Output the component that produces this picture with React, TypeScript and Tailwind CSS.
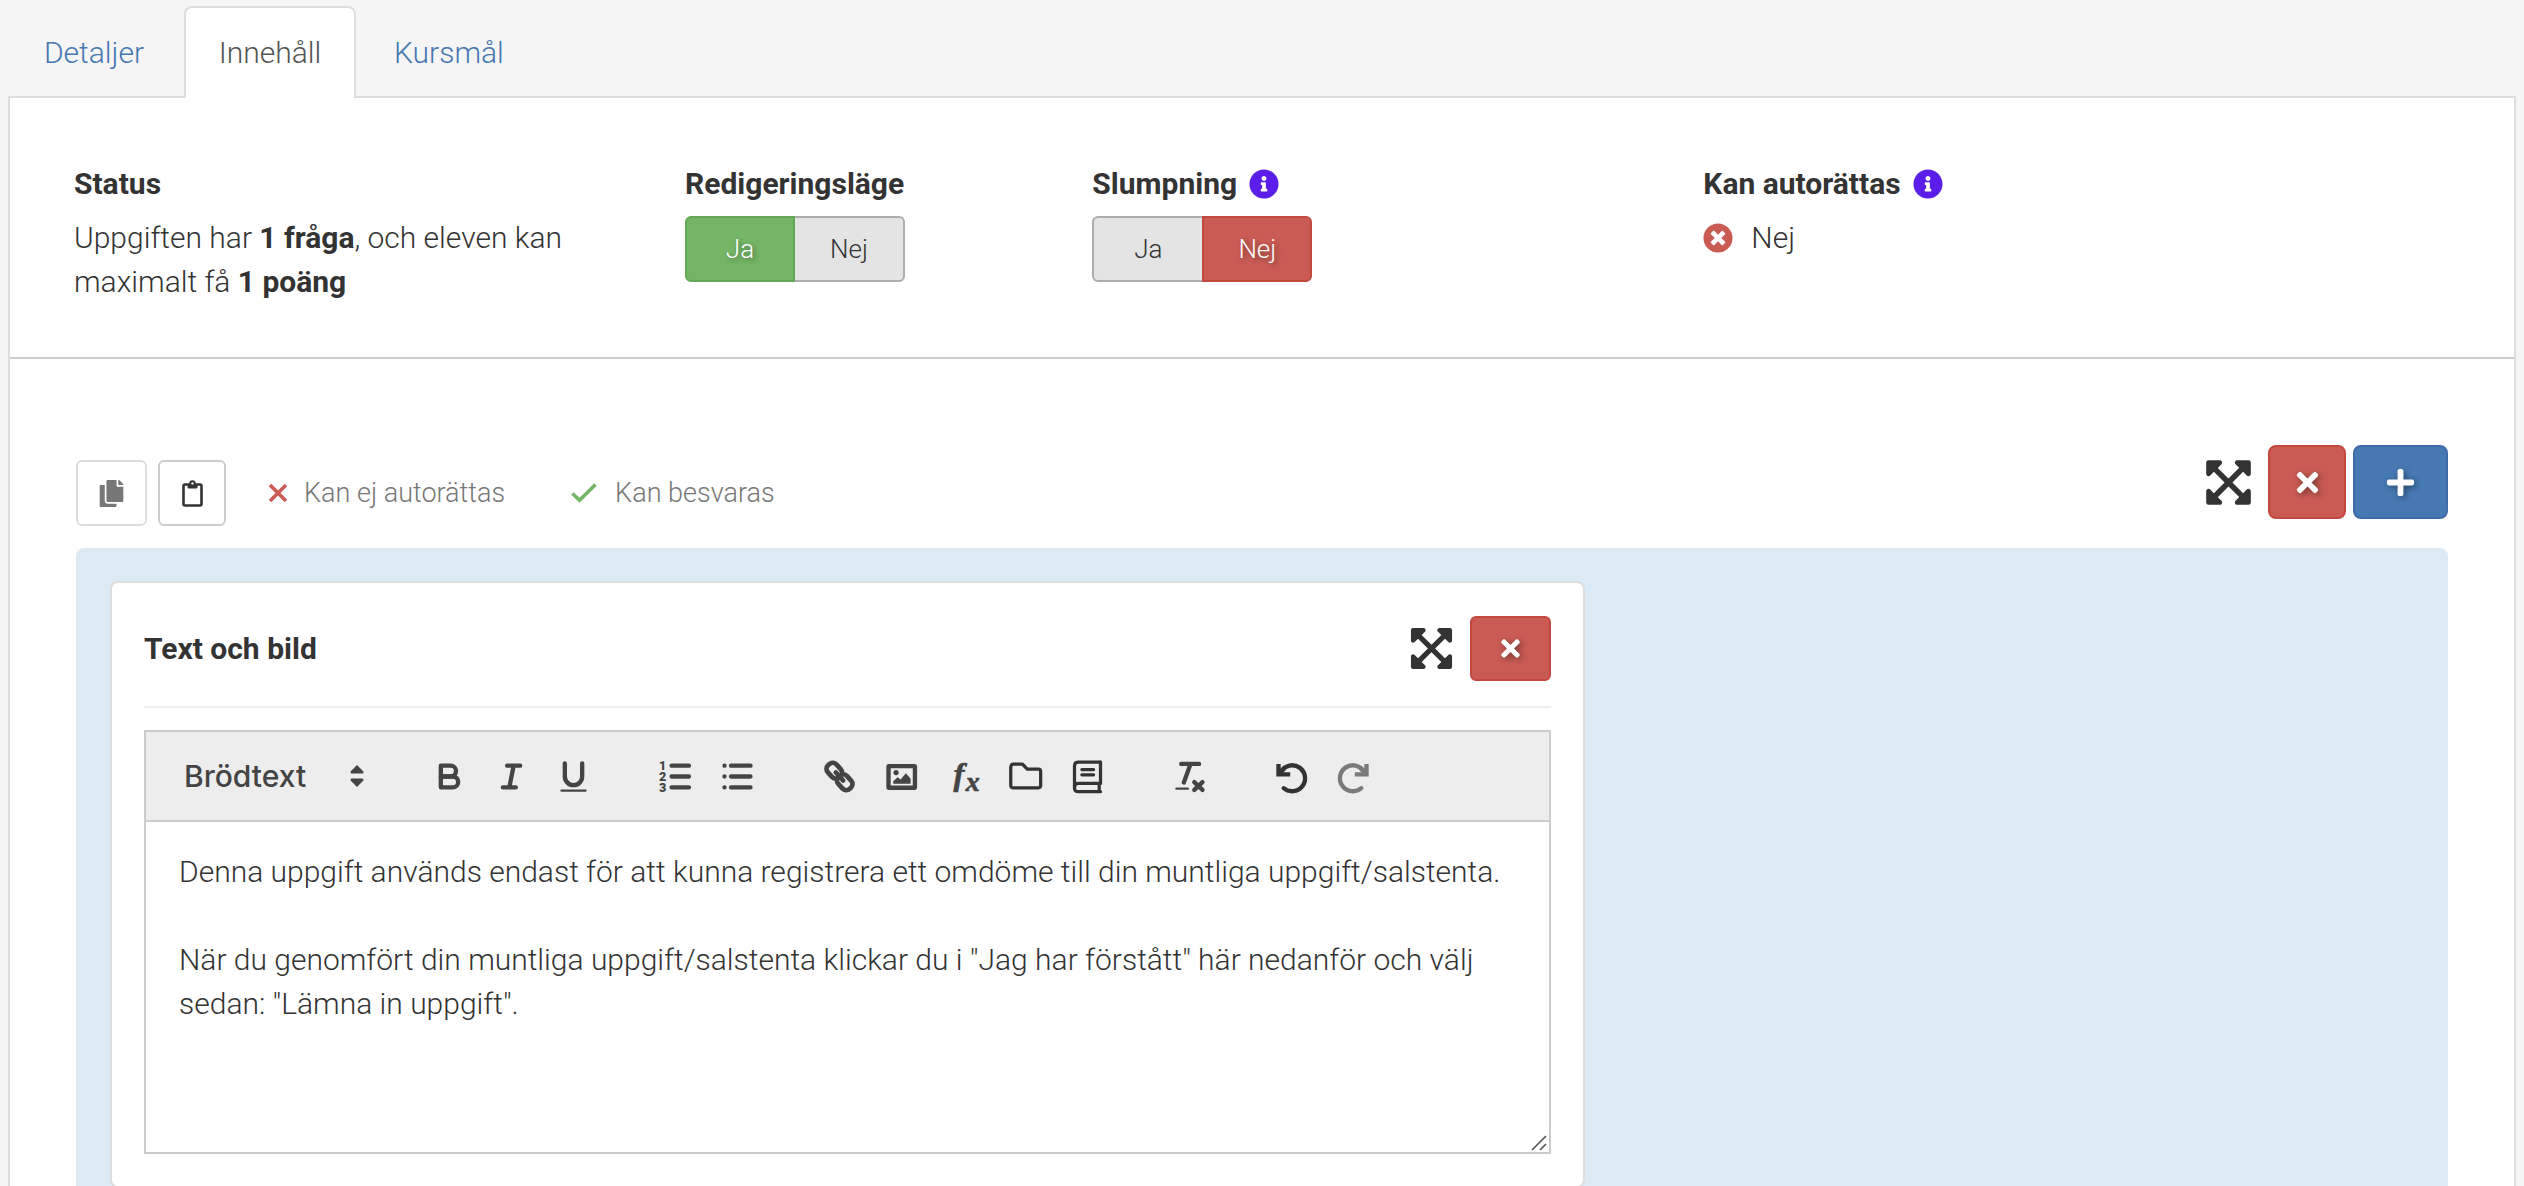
import { useState } from 'react';
import type { ReactNode } from 'react';
import { FaCopy, FaExpandArrowsAlt, FaInfoCircle, FaPlus, FaTimes, FaTimesCircle } from 'react-icons/fa';

const tabs = ['Detaljer', 'Innehåll', 'Kursmål'];

function Heading({ children, info }: { children: ReactNode; info?: boolean }) {
  return (
    <h2 className="flex items-center gap-3 mb-[10px] font-bold">
      {children}
      {info && <FaInfoCircle className="size-[30px] text-[#5a1dea]" />}
    </h2>
  );
}

type ToggleProps = {
  label: string;
  value: boolean;
  onChange: (value: boolean) => void;
};

function Toggle({ label, value, onChange }: ToggleProps) {
  const off = 'bg-[#e4e4e4] border-[#adadad] text-[#333]';
  const yes = 'bg-[#74b566] border-[#63a955] text-white [text-shadow:2px_2px_5px_rgba(0,0,0,0.4)]';
  const no = 'bg-[#c95b54] border-[#c3483f] text-white [text-shadow:2px_2px_5px_rgba(0,0,0,0.4)]';

  return (
    <div role="group" aria-label={label} className="flex text-[26px]">
      <button
        type="button"
        aria-pressed={value}
        onClick={() => onChange(true)}
        className={`w-[110px] h-[66px] border-2 rounded-l-md ${value ? yes : `${off} border-r-0`}`}
      >
        Ja
      </button>
      <button
        type="button"
        aria-pressed={!value}
        onClick={() => onChange(false)}
        className={`w-[110px] h-[66px] border-2 rounded-r-md ${value ? `${off} border-l-0` : no}`}
      >
        Nej
      </button>
    </div>
  );
}

function ClipboardIcon() {
  return (
    <svg viewBox="0 0 21 27" className="w-[21px] h-[27px]" fill="none" stroke="currentColor">
      <rect x="1.5" y="4.5" width="18" height="21" rx="1.5" strokeWidth="2.6" />
      <path d="M5.5 4.5H15.5V7Q15.5 8.5 14 8.5H7Q5.5 8.5 5.5 7Z" fill="currentColor" stroke="none" />
      <circle cx="10.5" cy="3.4" r="2.2" fill="white" strokeWidth="2" />
    </svg>
  );
}

function ToolButton({ label, disabled, children }: { label: string; disabled?: boolean; children: ReactNode }) {
  return (
    <button
      type="button"
      aria-label={label}
      disabled={disabled}
      className="flex justify-center items-center w-[62px] h-12 text-[#444] disabled:text-[#7a7a7a]"
    >
      <svg
        viewBox="0 0 18 18"
        className="size-[39px] overflow-visible"
        fill="none"
        stroke="currentColor"
        strokeWidth="2"
        strokeLinecap="round"
        strokeLinejoin="round"
      >
        {children}
      </svg>
    </button>
  );
}

function EditorToolbar() {
  return (
    <div className="flex items-center gap-10 h-[90px] px-8 bg-[#ededed] border-b-2 border-[#ccc]">
      <div className="relative w-[200px]">
        <select
          aria-label="Textformat"
          className="w-full h-12 pl-[6px] appearance-none bg-transparent font-['Inter',sans-serif] font-medium text-[30px] text-[#444]"
        >
          <option>Brödtext</option>
        </select>
        <svg viewBox="0 0 14 22" className="absolute right-[14px] top-[13px] w-[14px] h-[22px] pointer-events-none" fill="#444">
          <path d="M7 0 L13.4 6.4 Q14 8.6 12 8.6 H2 Q0 8.6 0.6 6.4 Z" />
          <path d="M7 22 L13.4 15.6 Q14 13.4 12 13.4 H2 Q0 13.4 0.6 15.6 Z" />
        </svg>
      </div>

      <div className="flex">
        <ToolButton label="Fet">
          <path d="M5 4H9.5A2.5 2.5 0 0 1 9.5 9H5Z" />
          <path d="M5 9H10.5A2.5 2.5 0 0 1 10.5 14H5Z" />
        </ToolButton>
        <ToolButton label="Kursiv">
          <path d="M7 4H13M5 14H11M8 14L10 4" />
        </ToolButton>
        <ToolButton label="Understruken">
          <path d="M5 3V9A4 4 0 0 0 13 9V3" />
          <path d="M3.4 15.5H14.6" strokeWidth="1" />
        </ToolButton>
      </div>

      <div className="flex">
        <ToolButton label="Numrerad lista">
          <path d="M7.2 4H15.2M7.2 9H15.2M7.2 14H15.2" />
          <g fill="currentColor" stroke="none" fontFamily="Roboto, sans-serif" fontWeight="900" fontSize="5.8">
            <text x="1.4" y="6">1</text>
            <text x="1.4" y="11">2</text>
            <text x="1.4" y="16.1">3</text>
          </g>
        </ToolButton>
        <ToolButton label="Punktlista">
          <path d="M6 4H15M6 9H15M6 14H15M3 4H3.01M3 9H3.01M3 14H3.01" />
        </ToolButton>
      </div>

      <div className="flex">
        <ToolButton label="Länk">
          <g transform="rotate(48 9 9)" strokeWidth="2.2">
            <rect x="1.6" y="6.3" width="7.6" height="5.4" rx="2.4" />
            <rect x="8.8" y="6.3" width="7.6" height="5.4" rx="2.4" />
            <path d="M6.5 9H11.5" />
          </g>
        </ToolButton>
        <ToolButton label="Bild">
          <rect x="3" y="4.2" width="12.2" height="10" rx="0.2" />
          <circle cx="6.5" cy="7.2" r="1.2" fill="currentColor" stroke="none" />
          <path d="M5.2 12.4V11.2L7.2 9.4L8.6 10.4L11 7.5L13.2 10V12.4Z" fill="currentColor" stroke="none" />
        </ToolButton>
        <ToolButton label="Formel">
          <g
            fill="currentColor"
            stroke="currentColor"
            strokeWidth="0.3"
            fontFamily="Liberation Serif, serif"
            fontStyle="italic"
          >
            <text x="4.4" y="12.9" fontSize="15" fontWeight="bold">f</text>
            <text x="10" y="15.8" fontSize="13" fontWeight="bold">x</text>
          </g>
        </ToolButton>
        <ToolButton label="Mapp">
          <path
            d="M2.2 4.8Q2.2 3.3 3.4 3.3H7.6L9.8 5.6H15Q16 5.6 16 6.6V13.2Q16 14.2 15 14.2H3.2Q2.2 14.2 2.2 13.2Z"
            strokeWidth="1.5"
            stroke="#333"
          />
        </ToolButton>
        <ToolButton label="Bok">
          <g strokeWidth="1.5" stroke="#333">
            <path d="M15 2.4H4.8Q3 2.4 3 4.2V14.4Q3 16 4.8 16H15" />
            <path d="M15 2.4V12.2H4.8Q3 12.2 3 14M14.4 12.4V15.6" />
            <path d="M6.4 5.8H11.8M6.4 8.2H11.8" />
          </g>
        </ToolButton>
      </div>

      <div className="flex">
        <ToolButton label="Rensa formatering">
          <path d="M5.2 3.2H13.4M9.4 3.4L6.4 11.8" />
          <path d="M3 14.6H8.2" strokeWidth="1.1" />
          <path d="M11.2 11.6L15 15.2M15 11.6L11.2 15.2" />
        </ToolButton>
      </div>

      <div className="flex">
        <ToolButton label="Ångra">
          <g stroke="#333">
            <path d="M4.2 6.6A6 6 0 1 1 5.4 14.4" />
            <path d="M3 3.2V8H8.4" strokeLinecap="butt" strokeLinejoin="miter" />
            <path d="M3 8L5.8 5.2" strokeLinecap="butt" />
          </g>
        </ToolButton>
        <ToolButton label="Gör om" disabled>
          <path d="M13.8 6.6A6 6 0 1 0 12.6 14.4" />
          <path d="M15 3.2V8H9.6" strokeLinecap="butt" strokeLinejoin="miter" />
          <path d="M15 8L12.2 5.2" strokeLinecap="butt" />
        </ToolButton>
      </div>
    </div>
  );
}

const defaultText = `Denna uppgift används endast för att kunna registrera ett omdöme till din muntliga uppgift/salstenta.

När du genomfört din muntliga uppgift/salstenta klickar du i "Jag har förstått" här nedanför och välj sedan: "Lämna in uppgift".`;

export default function App() {
  const [activeTab, setActiveTab] = useState('Innehåll');
  const [editMode, setEditMode] = useState(true);
  const [shuffle, setShuffle] = useState(false);

  return (
    <div className="min-h-screen px-2 pt-[6px] bg-[#f5f5f5] font-['Roboto',sans-serif] font-light text-[30px] leading-[44px] text-[#333]">
      <nav className="flex gap-1">
        {tabs.map((tab) => (
          <a
            key={tab}
            href="#"
            onClick={() => setActiveTab(tab)}
            className={`relative z-10 flex justify-center items-center min-w-[172px] h-[92px] px-8 -mb-[2px] border-2 border-b-0 rounded-t-lg ${
              tab === activeTab ? 'bg-white border-[#ddd] text-[#555]' : 'border-transparent text-[#4678b2]'
            }`}
          >
            {tab}
          </a>
        ))}
      </nav>

      <main className="bg-white border-2 border-[#ddd]">
        <section className="grid grid-cols-12 px-[30px] pt-16 pb-[53px] border-b-2 border-[#ccc]">
          <div className="col-span-3 px-[34px]">
            <Heading>Status</Heading>
            <p>
              Uppgiften har <strong className="font-bold">1 fråga</strong>, och eleven kan maximalt få{' '}
              <strong className="font-bold">1 poäng</strong>
            </p>
          </div>
          <div className="col-span-2 px-[34px]">
            <Heading>Redigeringsläge</Heading>
            <Toggle label="Redigeringsläge" value={editMode} onChange={setEditMode} />
          </div>
          <div className="col-span-3 px-[34px]">
            <Heading info>Slumpning</Heading>
            <Toggle label="Slumpning" value={shuffle} onChange={setShuffle} />
          </div>
          <div className="col-span-4 px-[34px]">
            <Heading info>Kan autorättas</Heading>
            <p className="flex items-center gap-[18px]">
              <FaTimesCircle className="size-[30px] text-[#c95b54]" />
              Nej
            </p>
          </div>
        </section>

        <section className="px-[66px] pt-[86px]">
          <div className="flex justify-between mb-[22px]">
            <div className="flex items-center pt-[15px] h-[81px] text-[27px] text-[#777]">
              <button
                type="button"
                aria-label="Kopiera"
                disabled
                className="flex justify-center items-center w-[71px] h-[66px] border-2 border-[#ddd] rounded-md"
              >
                <FaCopy className="size-[27px]" />
              </button>
              <button
                type="button"
                aria-label="Klistra in"
                className="flex justify-center items-center w-[68px] h-[66px] ml-[11px] border-2 border-[#ccc] rounded-md text-[#333]"
              >
                <ClipboardIcon />
              </button>
              <span className="flex items-center gap-4 ml-[42px]">
                <svg viewBox="0 0 20 20" className="size-5" fill="none" stroke="#c95b54" strokeWidth="3.6">
                  <path d="M2 2L18 18M18 2L2 18" />
                </svg>
                Kan ej autorättas
              </span>
              <span className="flex items-center gap-[18px] ml-[66px]">
                <svg viewBox="0 0 26 20" className="w-[26px] h-5" fill="none" stroke="#74b566" strokeWidth="3.6">
                  <path d="M1.5 10.5L8.5 17.2L24.5 1.5" />
                </svg>
                Kan besvaras
              </span>
            </div>
            <div className="flex items-center h-[74px]">
              <button type="button" aria-label="Flytta" className="mr-[14px]">
                <FaExpandArrowsAlt className="size-[51px]" />
              </button>
              <button
                type="button"
                aria-label="Ta bort"
                className="flex justify-center items-center w-[78px] h-[74px] mr-[7px] bg-[#c95b54] border-2 border-[#c3483f] rounded-lg text-white"
              >
                <FaTimes className="size-[31px] drop-shadow-[2px_2px_3px_rgba(0,0,0,0.4)]" />
              </button>
              <button
                type="button"
                aria-label="Lägg till"
                className="flex justify-center items-center w-[95px] h-[74px] bg-[#4678b2] border-2 border-[#3f6ca8] rounded-lg text-white"
              >
                <FaPlus className="size-[31px] drop-shadow-[2px_2px_3px_rgba(0,0,0,0.4)]" />
              </button>
            </div>
          </div>

          <div className="px-[34px] py-[33px] bg-[#dceaf6] rounded-lg">
            <article className="w-[64%] px-8 pt-[33px] pb-8 bg-white border-2 border-[#ddd] rounded-lg">
              <header className="flex items-center pb-[25px] mb-[22px] border-b-2 border-[#eee]">
                <h3 className="mr-auto font-bold">Text och bild</h3>
                <button type="button" aria-label="Flytta" className="mr-[15px]">
                  <FaExpandArrowsAlt className="size-[47px]" />
                </button>
                <button
                  type="button"
                  aria-label="Ta bort"
                  className="flex justify-center items-center w-[81px] h-[65px] bg-[#c95b54] border-2 border-[#c3483f] rounded-md text-white"
                >
                  <FaTimes className="size-[27px] drop-shadow-[2px_2px_3px_rgba(0,0,0,0.4)]" />
                </button>
              </header>

              <div className="relative border-2 border-[#ccc]">
                <EditorToolbar />
                <textarea
                  aria-label="Text"
                  defaultValue={defaultText}
                  className="block w-full h-[330px] px-[33px] py-[28px] resize-none outline-none"
                />
                <svg viewBox="0 0 16 16" className="absolute right-[2px] bottom-[1px] size-4" stroke="#555" strokeWidth="1.6">
                  <path d="M1 15L15 1M9 15L15 9" />
                </svg>
              </div>
            </article>
          </div>
        </section>
      </main>
    </div>
  );
}
